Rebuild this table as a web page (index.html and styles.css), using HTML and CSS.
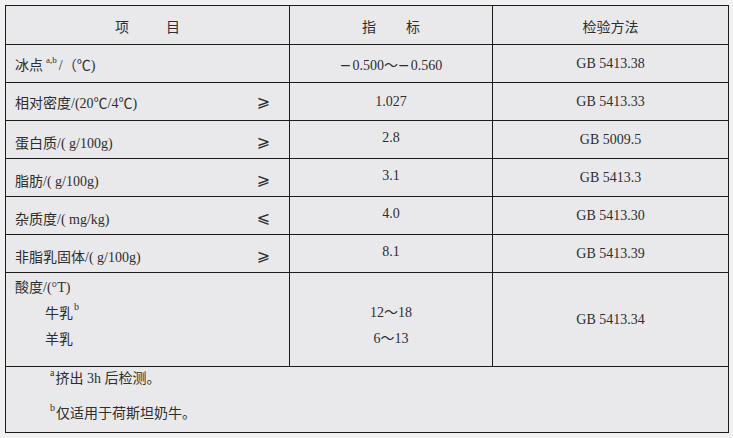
FILE: index.html
```html
<!DOCTYPE html>
<html lang="zh">
<head>
<meta charset="utf-8">
<link rel="stylesheet" href="styles.css">
</head>
<body>
<div class="wrap">
<table class="spec">
  <colgroup>
    <col class="c1"><col class="c2"><col class="c3">
  </colgroup>
  <tr class="head">
    <th><span class="sp1">项</span>目</th>
    <th><span class="sp2">指</span>标</th>
    <th>检验方法</th>
  </tr>
  <tr class="row">
    <td><div class="item"><span>冰点<sup class="sm">a,b</sup>/（℃)</span></div></td>
    <td class="val"><span class="minus">−</span>0.500～<span class="minus">−</span>0.560</td>
    <td class="val">GB 5413.38</td>
  </tr>
  <tr class="row">
    <td><div class="item"><span>相对密度/(20℃/4℃)</span><span class="rel">⩾</span></div></td>
    <td class="val">1.027</td>
    <td class="val">GB 5413.33</td>
  </tr>
  <tr class="row">
    <td><div class="item low"><span>蛋白质/( g/100g)</span><span class="rel">⩾</span></div></td>
    <td class="val up">2.8</td>
    <td class="val">GB 5009.5</td>
  </tr>
  <tr class="row">
    <td><div class="item low"><span>脂肪/( g/100g)</span><span class="rel">⩾</span></div></td>
    <td class="val up">3.1</td>
    <td class="val">GB 5413.3</td>
  </tr>
  <tr class="row">
    <td><div class="item low"><span>杂质度/( mg/kg)</span><span class="rel">⩽</span></div></td>
    <td class="val up">4.0</td>
    <td class="val">GB 5413.30</td>
  </tr>
  <tr class="row">
    <td><div class="item low"><span>非脂乳固体/( g/100g)</span><span class="rel">⩾</span></div></td>
    <td class="val up">8.1</td>
    <td class="val">GB 5413.39</td>
  </tr>
  <tr class="acid">
    <td class="acid-name">
      <div class="line">酸度/(°T)</div>
      <div class="line ind">牛乳<sup>b</sup></div>
      <div class="line ind">羊乳</div>
    </td>
    <td class="acid-val">
      <div class="line">12～18</div>
      <div class="line">6～13</div>
    </td>
    <td class="val">GB 5413.34</td>
  </tr>
  <tr class="notes">
    <td colspan="3">
      <div class="note"><sup>a</sup>挤出 3h 后检测。</div>
      <div class="note second"><sup>b</sup>仅适用于荷斯坦奶牛。</div>
    </td>
  </tr>
</table>
</div>
</body>
</html>
```

FILE: styles.css
```css
html, body {
  margin: 0;
  padding: 0;
  background: #f1f1f1;
}
body {
  font-family: "Liberation Serif", "Noto Sans CJK SC", serif;
  font-size: 14px;
  color: #2e2e2e;
}
.wrap {
  padding: 5px 0 0 5px;
}
.spec {
  border-collapse: collapse;
  table-layout: fixed;
  width: 723px;
  background: #e9e9ec;
}
.c1 { width: 284px; }
.c2 { width: 203px; }
.c3 { width: 236px; }
.spec th, .spec td {
  border: 1px solid #1c1c1c;
  padding: 0;
  font-weight: normal;
}
.head { height: 39px; }
.head th {
  text-align: center;
  vertical-align: middle;
  padding-top: 1px;
}
.sp1 { margin-right: 37px; }
.sp2 { margin-right: 30px; }
.row { height: 38px; }
.row td { vertical-align: middle; }
.item {
  display: flex;
  justify-content: space-between;
  align-items: center;
  padding: 1px 19px 0 9px;
}
.item.low { padding-top: 5px; }
.rel {
  font-family: "DejaVu Sans", sans-serif;
  font-size: 16px;
  line-height: 16px;
}
.minus {
  font-family: "DejaVu Sans", sans-serif;
  margin-right: 1px;
}
.val {
  text-align: center;
}
.val.up { padding-bottom: 4px; }
sup {
  font-size: 10px;
  line-height: 10px;
  vertical-align: top;
  position: relative;
  top: 1px;
  margin: 0 1px;
}
sup.sm {
  font-size: 9px;
  margin: 0 2px 0 3px;
}
.acid { height: 94px; }
.acid-name {
  vertical-align: top;
  padding: 2px 0 0 9px !important;
}
.line {
  line-height: 26px;
}
.ind { padding-left: 30px; }
.acid-val {
  vertical-align: top;
  text-align: center;
  padding-top: 27px !important;
}
.notes { height: 66px; }
.notes td {
  vertical-align: top;
  padding: 0 0 0 43px !important;
}
.note {
  line-height: 24px;
}
.note.second {
  margin-top: 11px;
}
```
